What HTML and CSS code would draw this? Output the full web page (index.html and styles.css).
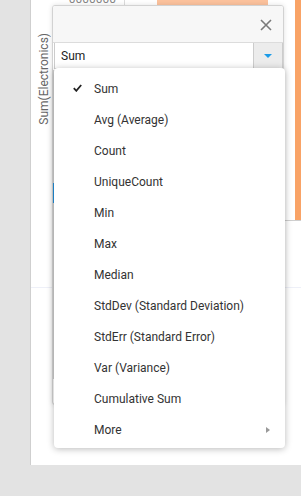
FILE: index.html
```html
<!DOCTYPE html>
<html>
<head>
<meta charset="utf-8">
<link rel="stylesheet" href="styles.css">
</head>
<body>
<div class="panel">
  <div class="chart">
    <div class="axis">
      <div class="ylabel">Sum(Electronics)</div>
      <div class="tick">0000000</div>
    </div>
    <div class="plot">
      <div class="bar bar1"></div>
      <div class="bar bar2"></div>
    </div>
  </div>

  <div class="dialog">
    <div class="dlg-head">
      <svg class="close" width="12" height="12" viewBox="0 0 12 12"><path d="M1 1L11 11M11 1L1 11" stroke="#7a7a7a" stroke-width="1.6" fill="none"/></svg>
    </div>
    <div class="select">
      <span class="sel-text">Sum</span>
      <span class="sel-btn"><span class="tri"></span></span>
    </div>
    <div class="list"></div>
    <div class="marker"></div>
  </div>

  <div class="menu">
    <div class="item"><svg class="check" width="9" height="8" viewBox="0 0 9 8"><path d="M0.8 4.2L3.3 6.8L8.2 1" stroke="#222" stroke-width="1.8" fill="none"/></svg>Sum</div>
    <div class="item">Avg (Average)</div>
    <div class="item">Count</div>
    <div class="item">UniqueCount</div>
    <div class="item">Min</div>
    <div class="item">Max</div>
    <div class="item">Median</div>
    <div class="item">StdDev (Standard Deviation)</div>
    <div class="item">StdErr (Standard Error)</div>
    <div class="item">Var (Variance)</div>
    <div class="item">Cumulative Sum</div>
    <div class="item">More<span class="sub"></span></div>
  </div>
</div>
</body>
</html>
```

FILE: styles.css
```css
html, body {
  margin: 0;
  padding: 0;
}
body {
  background: #e3e3e3;
  font-family: Roboto, "Liberation Sans", sans-serif;
  font-size: 12px;
  color: #333;
  height: 496px;
  overflow: hidden;
}
.panel {
  position: relative;
  margin-left: 30px;
  width: 270px;
  height: 465px;
  background: #fff;
  border-left: 1px solid #cfcfcf;
  overflow: hidden;
}
.chart {
  display: flex;
  height: 287px;
  border-bottom: 1px solid #eef0f8;
}
.axis {
  width: 94px;
  border-right: 1px solid #dcdcdc;
  display: flex;
  align-items: flex-start;
}
.ylabel {
  margin-left: 6px;
  margin-top: 33px;
  writing-mode: vertical-rl;
  transform: rotate(180deg);
  line-height: 14px;
  color: #666;
  font-size: 12px;
}
.tick {
  margin-left: auto;
  padding-right: 8px;
  margin-top: -8px;
  line-height: 14px;
  color: #888;
}
.plot {
  flex: 1;
  height: 220px;
  display: flex;
  align-items: flex-start;
  border-bottom: 1px solid #cfcfcf;
}
.bar1 {
  margin-left: 32px;
  width: 111px;
  height: 5px;
  background: #fcc29d;
}
.bar2 {
  margin-left: 27px;
  width: 6px;
  height: 220px;
  background: #f9a366;
}
.dialog {
  position: absolute;
  left: 21px;
  top: 5px;
  width: 230px;
  height: 398px;
  border: 1px solid #d2d2d2;
  border-radius: 3px;
  background: #fff;
  box-shadow: 0 0 5px rgba(0,0,0,0.12);
  overflow: hidden;
}
.dlg-head {
  height: 36px;
  background: #f7f7f7;
  border-bottom: 1px solid #dcdcdc;
  display: flex;
  align-items: center;
  justify-content: flex-end;
  padding-right: 11px;
}
.close {
  margin-top: 1px;
}
.select {
  margin-left: 1px;
  height: 25px;
  border: 1px solid #cccccc;
  border-top: none;
  display: flex;
  align-items: center;
}
.sel-text {
  padding-left: 6px;
  flex: 1;
  color: #222;
}
.sel-btn {
  width: 28px;
  align-self: stretch;
  background: #ececec;
  border-left: 1px solid #cccccc;
  display: flex;
  align-items: center;
  justify-content: center;
}
.tri {
  width: 0;
  height: 0;
  border-left: 4px solid transparent;
  border-right: 4px solid transparent;
  border-top: 4px solid #1b9be8;
  margin-top: 1px;
}
.list {
  margin-top: 1px;
  height: 308px;
  border-left: 2px solid #cfcfcf;
  border-bottom: 1px solid #cfcfcf;
  width: 40px;
}
.marker {
  position: absolute;
  left: 0;
  top: 177px;
  width: 2px;
  height: 20px;
  background: #2090dd;
}
.menu {
  position: absolute;
  left: 23px;
  top: 68px;
  width: 231px;
  padding: 5px 0 3px;
  background: #fff;
  border-radius: 4px;
  box-shadow: 0 1px 7px rgba(0,0,0,0.28);
}
.item {
  position: relative;
  height: 31px;
  display: flex;
  align-items: center;
  padding-left: 40px;
  color: #333;
  white-space: nowrap;
}
.check {
  position: absolute;
  left: 19px;
  top: 11px;
}
.sub {
  margin-left: auto;
  margin-right: 15px;
  width: 0;
  height: 0;
  border-top: 3.5px solid transparent;
  border-bottom: 3.5px solid transparent;
  border-left: 4px solid #999;
}
```
